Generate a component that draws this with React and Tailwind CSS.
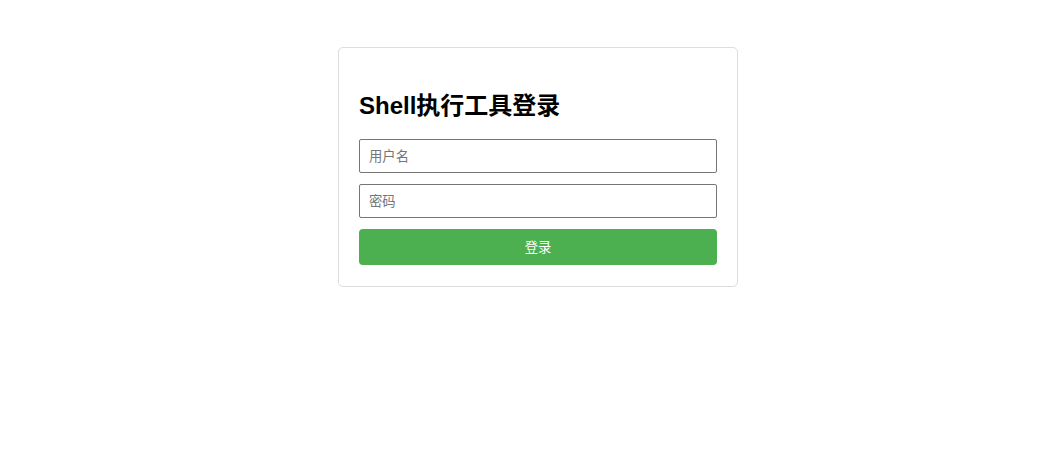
export default function App() {
  return (
    <div
      className="min-h-screen bg-white flex justify-center pl-[22px] pt-[47px]"
      style={{ fontFamily: '"Liberation Sans", "Noto Sans CJK SC", sans-serif' }}
    >
      <div className="w-[400px] h-[240px] border border-[#dddddd] rounded-[5px] px-5 pt-10 pb-[21px]">
        <h2 className="text-[24px] font-bold leading-[35px] text-black mb-4">Shell执行工具登录</h2>
        <div className="flex flex-col gap-[11px]">
          <input
            type="text"
            placeholder="用户名"
            className="w-full h-[34px] border border-[#767676] rounded-[2px] pl-[9px] pr-[8px] text-[13.33px] placeholder:text-[#757575] outline-none"
          />
          <input
            type="password"
            placeholder="密码"
            className="w-full h-[34px] border border-[#767676] rounded-[2px] pl-[9px] pr-[8px] text-[13.33px] placeholder:text-[#757575] outline-none"
          />
          <button className="w-full h-[36px] pt-[2px] bg-[#4caf50] text-white text-[13.33px] rounded-[4px]">
            登录
          </button>
        </div>
      </div>
    </div>
  );
}
